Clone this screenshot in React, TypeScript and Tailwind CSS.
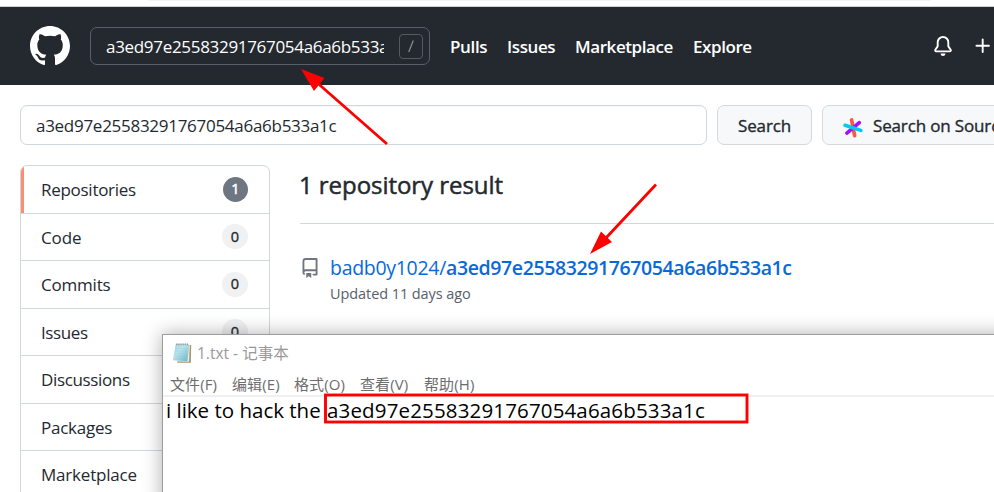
import React from "react";

const HASH = "a3ed97e25583291767054a6a6b533a1c";

const filters = [
  { label: "Repositories", count: 1, spacing: "tracking-[-0.28px]" },
  { label: "Code", count: 0, spacing: "tracking-[-0.1px]" },
  { label: "Commits", count: 0, spacing: "tracking-[-0.2px]" },
  { label: "Issues", count: 0, spacing: "tracking-[-0.4px]" },
  { label: "Discussions", count: 0, spacing: "tracking-[-0.35px]" },
  { label: "Packages", count: 0, spacing: "tracking-[-0.25px]" },
  { label: "Marketplace", count: 0, spacing: "tracking-[-0.2px]" },
];

function Octicon({ d, className }: { d: string; className: string }) {
  return (
    <svg viewBox="0 0 16 16" fill="currentColor" fillRule="evenodd" className={className}>
      <path d={d} />
    </svg>
  );
}

const MARK =
  "M8 0C3.58 0 0 3.58 0 8c0 3.54 2.29 6.53 5.47 7.59.4.07.55-.17.55-.38 0-.19-.01-.82-.01-1.49-2.01.37-2.53-.49-2.69-.94-.09-.23-.48-.94-.82-1.13-.28-.15-.68-.52-.01-.53.63-.01 1.08.58 1.23.82.72 1.21 1.87.87 2.33.66.07-.52.28-.87.51-1.07-1.78-.2-3.64-.89-3.64-3.95 0-.87.31-1.59.82-2.15-.08-.2-.36-1.02.08-2.12 0 0 .67-.21 2.2.82.64-.18 1.32-.27 2-.27.68 0 1.36.09 2 .27 1.53-1.04 2.2-.82 2.2-.82.44 1.1.16 1.92.08 2.12.51.56.82 1.27.82 2.15 0 3.07-1.87 3.75-3.65 3.95.29.25.54.73.54 1.48 0 1.07-.01 1.93-.01 2.2 0 .21.15.46.55.38A8.013 8.013 0 0016 8c0-4.42-3.58-8-8-8z";
const BELL =
  "M8 16a2 2 0 001.985-1.75c.017-.137-.097-.25-.235-.25h-3.5c-.138 0-.252.113-.235.25A2 2 0 008 16zM8 1.5A3.5 3.5 0 004.5 5v2.947c0 .346-.102.683-.294.97l-1.703 2.556a.018.018 0 00-.003.01l.001.006c0 .002.002.004.004.006a.017.017 0 00.006.004l.007.001h10.964l.007-.001a.016.016 0 00.006-.004.016.016 0 00.004-.006l.001-.007a.017.017 0 00-.003-.01l-1.703-2.554a1.75 1.75 0 01-.294-.97V5A3.5 3.5 0 008 1.5zM3 5a5 5 0 0110 0v2.947c0 .05.015.098.042.139l1.703 2.555A1.518 1.518 0 0113.482 13H2.518a1.518 1.518 0 01-1.263-2.36l1.703-2.554A.25.25 0 003 7.947V5z";
const PLUS =
  "M7.75 2a.75.75 0 01.75.75V7h4.25a.75.75 0 110 1.5H8.5v4.25a.75.75 0 11-1.5 0V8.5H2.75a.75.75 0 010-1.5H7V2.75A.75.75 0 017.75 2z";
const REPO =
  "M2 2.5A2.5 2.5 0 014.5 0h8.75a.75.75 0 01.75.75v12.5a.75.75 0 01-.75.75h-2.5a.75.75 0 110-1.5h1.75v-2h-8a1 1 0 00-.714 1.7.75.75 0 01-1.072 1.05A2.495 2.495 0 012 11.5v-9zm10.5-1V9h-8c-.356 0-.694.074-1 .208V2.5a1 1 0 011-1h8zM5 12.25v3.25a.25.25 0 00.4.2l1.45-1.087a.25.25 0 01.3 0L8.6 15.7a.25.25 0 00.4-.2v-3.25a.25.25 0 00-.25-.25h-3.5a.25.25 0 00-.25.25z";

function SourcegraphIcon() {
  return (
    <svg viewBox="0 0 20 20" className="h-5 w-5 shrink-0" fill="none" strokeWidth="3.6" strokeLinecap="round">
      <path d="M8.6 1.9 11.6 17.7" stroke="#ff5543" />
      <path d="M16.3 4.6 3.9 15.1" stroke="#a112ff" />
      <path d="M2.1 7.3 17.8 12.4" stroke="#00cbec" />
    </svg>
  );
}

function NotepadIcon() {
  return (
    <svg viewBox="0 0 20 22" className="-mt-px h-[22px] w-5 shrink-0">
      <defs>
        <linearGradient id="page" x1="0" y1="0" x2="1" y2="1">
          <stop offset="0" stopColor="#a9d6e2" />
          <stop offset=".4" stopColor="#b9e3ec" />
          <stop offset="1" stopColor="#62b2c8" />
        </linearGradient>
      </defs>
      <path d="M4 2.500 19.200 3 18.800 20.800 5.500 20.800 5 19z" fill="#a3966f" />
      <path d="M4 2.500 18 3.300 17 19.700 5 19.500z" fill="#efe8d2" />
      <path d="M3.500 2.400 17.300 2.400 15.300 19.200 0.800 18.200z" fill="url(#page)" />
      <path d="M3.400 6.500H15.800M3 9H15.400M2.700 11.500H15M2.300 14H14.700" stroke="#8cc8d7" strokeWidth=".3" />
      <path d="M4.800 3.200V1.400M6.900 3.200V1.400M9 3.200V1.400M11.100 3.200V1.400M13.200 3.200V1.400M15.300 3.200V1.400" stroke="#7c878d" strokeWidth="1" />
    </svg>
  );
}

function Header() {
  return (
    <header className="flex h-[78px] items-center bg-[#24292f] pl-[30px] text-white">
      <Octicon d={MARK} className="h-10 w-10 shrink-0" />
      <div className="ml-5 flex h-[38px] w-[340px] shrink-0 items-center rounded-[7px] border border-[#57606a] pl-[15px]">
        <div className="w-[278px] overflow-hidden whitespace-nowrap pt-0.5 text-[17px] leading-6 tracking-[-0.31px]">{HASH}</div>
        <div className="ml-[15px] flex h-[25px] w-6 items-center justify-center rounded-[4px] border border-[#555a60]">
          <svg viewBox="0 0 24 25" className="h-[23px] w-[22px]" fill="none" stroke="#8c9095" strokeWidth="1.3">
            <path d="M9.500 18.500 14.500 6" />
          </svg>
        </div>
      </div>
      <nav className="ml-5 flex whitespace-nowrap pt-0.5 text-[17px] font-semibold leading-6">
        <a className="w-[57px] tracking-[-0.35px]">Pulls</a>
        <a className="w-[68px] tracking-[-0.4px]">Issues</a>
        <a className="w-[118px] tracking-[-0.43px]">Marketplace</a>
        <a className="w-[240px] tracking-[-0.43px]">Explore</a>
      </nav>
      <Octicon d={BELL} className="h-5 w-5 shrink-0" />
      <Octicon d={PLUS} className="ml-5 h-5 w-5 shrink-0" />
    </header>
  );
}

function SearchRow() {
  return (
    <div className="flex whitespace-nowrap pl-5 pt-5 text-[17px] leading-6 text-[#24292f]">
      <div className="flex h-10 w-[687px] shrink-0 items-center rounded-[7px] border border-[#d0d7de] pl-[15px] pt-0.5 tracking-[-0.28px] shadow-[inset_0_1px_0_rgba(208,215,222,0.2)]">
        {HASH}
      </div>
      <button className="ml-[10px] flex h-10 w-[95px] shrink-0 items-center justify-center rounded-[7px] border border-[#d5d9dd] bg-[#f6f8fa] pt-0.5 tracking-[-0.15px] [-webkit-text-stroke:0.35px_#24292f]">
        Search
      </button>
      <button className="ml-[10px] flex h-10 w-[240px] shrink-0 items-center rounded-[7px] border border-[#d5d9dd] bg-[#f6f8fa] pl-5">
        <span className="mt-[5px]">
          <SourcegraphIcon />
        </span>
        <span className="ml-[10px] pt-0.5 tracking-[-0.15px] [-webkit-text-stroke:0.35px_#24292f]">Search on Sourcegraph</span>
      </button>
    </div>
  );
}

function Sidebar() {
  return (
    <aside className="w-[250px] shrink-0 overflow-hidden rounded-t-[7px] border border-[#d0d7de]">
      {filters.map((f, i) => (
        <div
          key={f.label}
          className="relative flex h-[47.5px] items-center justify-between border-b border-[#d0d7de] pl-5 pr-[21px] text-[17px] leading-6 text-[#24292f]"
        >
          {i === 0 && <span className="absolute inset-y-0 left-0 w-[3px] bg-[#fd8c73]" />}
          <span className={"pt-[2px] " + f.spacing}>{f.label}</span>
          <span
            className={
              "flex h-[25px] items-center justify-center rounded-full text-[14.5px] " +
              (i === 0
                ? "w-[25px] bg-[#6e7781] text-white [-webkit-text-stroke:0.5px_#fff]"
                : "w-[26px] bg-[#eff1f3] [-webkit-text-stroke:0.35px_#24292f]")
            }
          >
            {f.count}
          </span>
        </div>
      ))}
    </aside>
  );
}

function Results() {
  return (
    <main className="ml-[30px] flex-1 whitespace-nowrap">
      <h3 className="h-[59px] border-b border-[#d0d7de] pt-[3px] text-[24px] leading-[34px] tracking-[-0.05px] text-[#24292f] [-webkit-text-stroke:0.5px_#24292f]">
        <span className="-ml-px">1 repository result</span>
      </h3>
      <div className="flex pt-[29px]">
        <Octicon d={REPO} className="mt-[5px] h-5 w-5 shrink-0 text-[#6e7781]" />
        <div className="ml-[10px]">
          <div className="text-[19.5px] leading-[30px] text-[#0969da]">
            <span className="tracking-[-0.3px]">badb0y1024/</span>
            <span className="font-semibold tracking-[-0.39px]">{HASH}</span>
          </div>
          <div className="text-[14.5px] leading-[22px] tracking-[-0.08px] text-[#57606a]">Updated 11 days ago</div>
        </div>
      </div>
    </main>
  );
}

function Notepad() {
  return (
    <section className="absolute left-[162px] top-[334px] h-[200px] w-[860px] border border-[#9d9d9d] bg-white shadow-[0_0_18px_rgba(0,0,0,0.32)]">
      <div className="flex h-[37px] items-center pl-[9px] text-[15.5px] text-[#999]">
        <NotepadIcon />
        <span className="ml-[5px]">1.txt - 记事本</span>
      </div>
      <div className="flex h-[25px] items-center whitespace-nowrap border-b-2 border-[#f0f0f0] pl-[7px] text-[15px] leading-[22px] tracking-[0.1px] text-[#6d6d6d]">
        <span className="w-[62px]">文件(F)</span>
        <span className="w-[62px]">编辑(E)</span>
        <span className="w-[66px]">格式(O)</span>
        <span className="w-[64px]">查看(V)</span>
        <span>帮助(H)</span>
      </div>
      <div className="flex whitespace-pre pl-[3px] text-[20.5px] leading-[26px] text-black">
        <span className="w-[161px]">i like to hack the</span>
        <span className="tracking-[0.15px]">{HASH}</span>
      </div>
    </section>
  );
}

export default function App() {
  return (
    <div className="relative h-[492px] w-[994px] overflow-hidden bg-white font-['Open_Sans','Noto_Sans_CJK_SC',sans-serif]">
      <div className="h-[7px] border-b border-[#d0d3d6] pl-[148px]">
        <div className="h-px w-[783px] bg-[#f1f3f4]" />
      </div>
      <Header />
      <SearchRow />
      <div className="flex pl-5 pt-5">
        <Sidebar />
        <Results />
      </div>
      <Notepad />
      <svg viewBox="0 0 994 492" className="pointer-events-none absolute inset-0 h-full w-full" fill="none">
        <path d="M387 144 318 83.500M656 184.500 605 239" stroke="#f00" strokeWidth="2.8" />
        <path d="M301 69 324.500 78 314 91zM590 254 601 231.500 612 242z" fill="#f00" />
        <rect x="325.500" y="395" width="421.500" height="27" stroke="#f00" strokeWidth="2.9" />
      </svg>
    </div>
  );
}
